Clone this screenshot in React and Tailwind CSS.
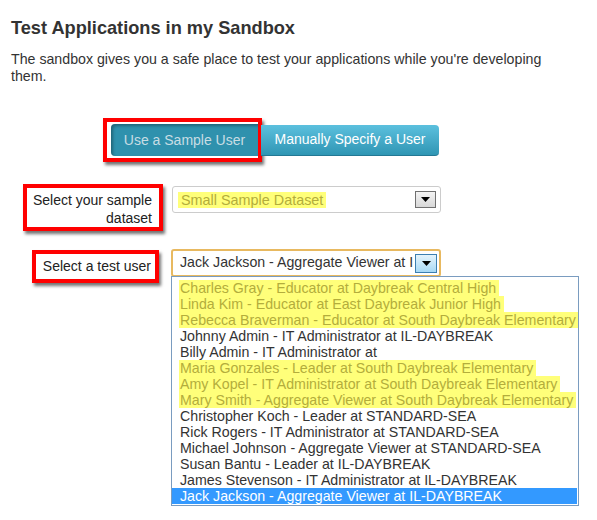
const users = [
  { name: 'Charles Gray - Educator at Daybreak Central High', hi: true },
  { name: 'Linda Kim - Educator at East Daybreak Junior High', hi: true },
  { name: 'Rebecca Braverman - Educator at South Daybreak Elementary', hi: true },
  { name: 'Johnny Admin - IT Administrator at IL-DAYBREAK' },
  { name: 'Billy Admin - IT Administrator at' },
  { name: 'Maria Gonzales - Leader at South Daybreak Elementary', hi: true },
  { name: 'Amy Kopel - IT Administrator at South Daybreak Elementary', hi: true },
  { name: 'Mary Smith - Aggregate Viewer at South Daybreak Elementary', hi: true },
  { name: 'Christopher Koch - Leader at STANDARD-SEA' },
  { name: 'Rick Rogers - IT Administrator at STANDARD-SEA' },
  { name: 'Michael Johnson - Aggregate Viewer at STANDARD-SEA' },
  { name: 'Susan Bantu - Leader at IL-DAYBREAK' },
  { name: 'James Stevenson - IT Administrator at IL-DAYBREAK' },
  { name: 'Jack Jackson - Aggregate Viewer at IL-DAYBREAK', selected: true },
];

function Arrow() {
  return (
    <svg width="9" height="5" viewBox="0 0 9 5">
      <path d="M0 0h9L4.5 5z" fill="#000" />
    </svg>
  );
}

export default function App() {
  return (
    <div className="w-[597px] h-[520px] bg-white text-[#333] overflow-hidden font-['Liberation_Sans',Arial,sans-serif]">
      <div className="px-[11px] pt-[17px]">
        <h1 className="text-[18.2px] leading-[22px] font-bold text-[#333]">Test Applications in my Sandbox</h1>
        <p className="mt-[12px] text-[14.2px] leading-[17px] w-[545px]">
          The sandbox gives you a safe place to test your applications while you're developing them.
        </p>
      </div>

      {/* mode buttons */}
      <div className="flex items-center ml-[103px] mt-[33px]">
        <div className="border-[4px] border-[#ff0000] shadow-[2px_3px_3px_rgba(0,0,0,0.55)] pl-[4px] pt-[2px] pb-[2px] pr-0">
          <button className="w-[147px] h-[32px] rounded-l-[4px] bg-[#2f91ad] text-[#c8dde4] text-[14px] shadow-[inset_2px_2px_3px_rgba(0,0,0,0.3)]">
            Use a Sample User
          </button>
        </div>
        <button className="w-[178px] h-[31px] -ml-[1px] rounded-r-[4px] bg-gradient-to-b from-[#5bc0de] to-[#2f96b4] text-white text-[14px] border-b border-[#237894]">
          Manually Specify a User
        </button>
      </div>

      {/* dataset row */}
      <div className="flex items-start mt-[22px]">
        <div className="w-[163px] flex justify-end">
          <div className="w-[140px] h-[47px] border-[4px] border-[#ff0000] shadow-[2px_3px_3px_rgba(0,0,0,0.55)] text-right text-[14px] leading-[18px] pl-[2px] pr-[7px] pt-[3px] text-[#222]">
            Select your sample dataset
          </div>
        </div>
        <div className="ml-[9px] mt-[2px] w-[269px] h-[27px] border border-[#ccc] rounded-[3px] flex items-center justify-between pl-[5px] pr-[4px]">
          <span className="bg-[#ffff7a] text-[#b3ad3c] text-[14.4px] leading-[16px] px-[3px] w-[148px] whitespace-nowrap">Small Sample Dataset</span>
          <span className="w-[21px] h-[17px] border border-[#707070] bg-gradient-to-b from-[#f4f4f4] to-[#d8d8d8] flex items-center justify-center">
            <Arrow />
          </span>
        </div>
      </div>

      {/* test user row */}
      <div className="flex items-start mt-[19px]">
        <div className="w-[159px] flex justify-end">
          <div className="w-[127px] h-[33px] border-[4px] border-[#ff0000] shadow-[2px_3px_3px_rgba(0,0,0,0.55)] text-right text-[14px] leading-[18px] pr-[4px] pt-[3px] text-[#222]">
            Select a test user
          </div>
        </div>
        <div className="ml-[12px] -mt-[1px] flex flex-col">
          <div className="w-[270px] h-[28px] border-2 border-[#e8b960] rounded-[3px] flex items-center justify-between pl-[7px] pr-[2px] overflow-hidden">
            <span className="text-[14.2px] text-[#333] whitespace-nowrap overflow-hidden w-[235px]">Jack Jackson - Aggregate Viewer at I</span>
            <span className="w-[22px] h-[19px] shrink-0 border border-[#3c7fb1] bg-gradient-to-b from-[#e5f4fc] to-[#a7d9f5] flex items-center justify-center">
              <Arrow />
            </span>
          </div>
          <div className="w-[408px] border border-[#7a9cc0] -mt-[1px] flex flex-col pt-[3px] pb-[1px] pr-[1px] overflow-hidden">
            {users.map((u) => (
              <div
                key={u.name}
                className={
                  'h-[16px] text-[14.2px] leading-[16px] whitespace-nowrap pl-[8px] ' +
                  (u.selected ? 'bg-[#3399ff] text-white' : 'text-[#333]')
                }
              >
                {u.hi ? (
                  <span className="bg-[#ffff7a] text-[#b3ad3c] pr-[3px] -ml-[1px] pl-[1px]">{u.name}</span>
                ) : (
                  u.name
                )}
              </div>
            ))}
          </div>
        </div>
      </div>
    </div>
  );
}
